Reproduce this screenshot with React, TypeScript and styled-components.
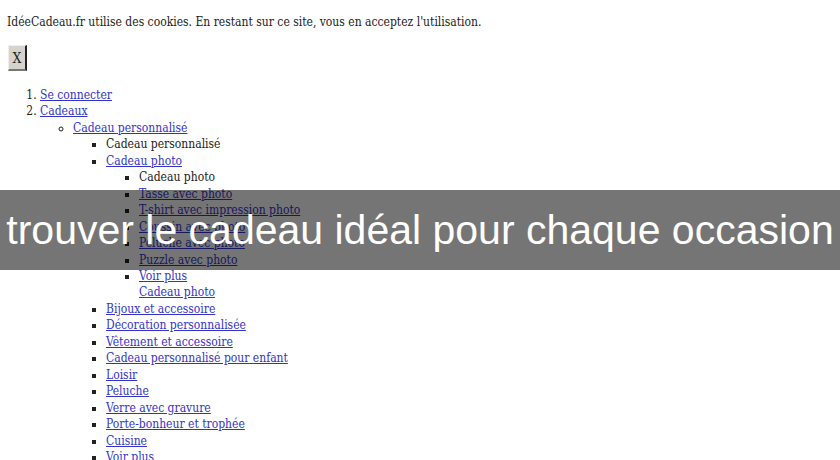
import * as React from 'react';
import styled, { createGlobalStyle } from 'styled-components';

const GlobalStyle = createGlobalStyle`
  html, body {
    margin: 0;
    padding: 0;
    background: #ffffff;
  }
  body {
    font-family: 'DejaVu Serif Condensed', 'DejaVu Serif', serif;
    font-stretch: condensed;
    font-size: 12px;
    color: #222222;
    overflow: hidden;
  }
`;

const Page = styled.div`
  position: relative;
  width: 840px;
  height: 460px;
  padding: 0 7px;
  box-sizing: border-box;
  overflow: hidden;
`;

const CookieNotice = styled.p`
  margin: 14px 0 0;
  line-height: 17px;
`;

const CloseButton = styled.button`
  display: block;
  margin: 14px 0 0 1px;
  width: 19px;
  height: 26px;
  padding: 0;
  font-family: 'DejaVu Serif Condensed', 'DejaVu Serif', serif;
  font-stretch: condensed;
  font-size: 14px;
  color: #222;
  background: #d6d3cc;
  border-style: solid;
  border-width: 1px 2px 2px 1px;
  border-color: #eeeeee #222222 #777777 #eeeeee;
`;

const Menu = styled.ol`
  margin: 16px 0 0;
  padding-left: 33px;
  line-height: 16.45px;
`;

const SubList = styled.ul<{ $circle?: boolean }>`
  margin: 0;
  padding-left: 33px;
  list-style-type: ${(p) => (p.$circle ? 'circle' : 'square')};
`;

const Item = styled.li``;

const Link = styled.a`
  color: #3333cc;
  text-decoration: underline;
`;

const BlockLink = styled(Link)`
  display: block;
`;

const Banner = styled.div`
  position: absolute;
  left: 0;
  right: 0;
  top: 190px;
  height: 80px;
  display: flex;
  align-items: center;
  justify-content: center;
  background: rgba(0, 0, 0, 0.54);
  color: #ffffff;
  font-family: 'Liberation Sans', Arial, sans-serif;
  font-size: 41px;
  white-space: nowrap;
`;

const photoItems = [
  'Tasse avec photo',
  'T-shirt avec impression photo',
  'Coussin avec photo',
  'Peluche avec photo',
  'Puzzle avec photo',
];

const otherItems = [
  'Bijoux et accessoire',
  'Décoration personnalisée',
  'Vêtement et accessoire',
  'Cadeau personnalisé pour enfant',
  'Loisir',
  'Peluche',
  'Verre avec gravure',
  'Porte-bonheur et trophée',
  'Cuisine',
  'Voir plus',
];

export default function App(): JSX.Element {
  return (
    <Page>
      <GlobalStyle />
      <CookieNotice>
        IdéeCadeau.fr utilise des cookies. En restant sur ce site, vous en acceptez l'utilisation.
      </CookieNotice>
      <CloseButton>X</CloseButton>
      <Menu>
        <Item>
          <Link href="#">Se connecter</Link>
        </Item>
        <Item>
          <Link href="#">Cadeaux</Link>
          <SubList $circle>
            <Item>
              <Link href="#">Cadeau personnalisé</Link>
              <SubList>
                <Item>Cadeau personnalisé</Item>
                <Item>
                  <Link href="#">Cadeau photo</Link>
                  <SubList>
                    <Item>Cadeau photo</Item>
                    {photoItems.map((label) => (
                      <Item key={label}>
                        <Link href="#">{label}</Link>
                      </Item>
                    ))}
                    <Item>
                      <Link href="#">Voir plus</Link>
                      <BlockLink href="#">Cadeau photo</BlockLink>
                    </Item>
                  </SubList>
                </Item>
                {otherItems.map((label) => (
                  <Item key={label}>
                    <Link href="#">{label}</Link>
                  </Item>
                ))}
              </SubList>
            </Item>
          </SubList>
        </Item>
      </Menu>
      <Banner>trouver le cadeau idéal pour chaque occasion</Banner>
    </Page>
  );
}
